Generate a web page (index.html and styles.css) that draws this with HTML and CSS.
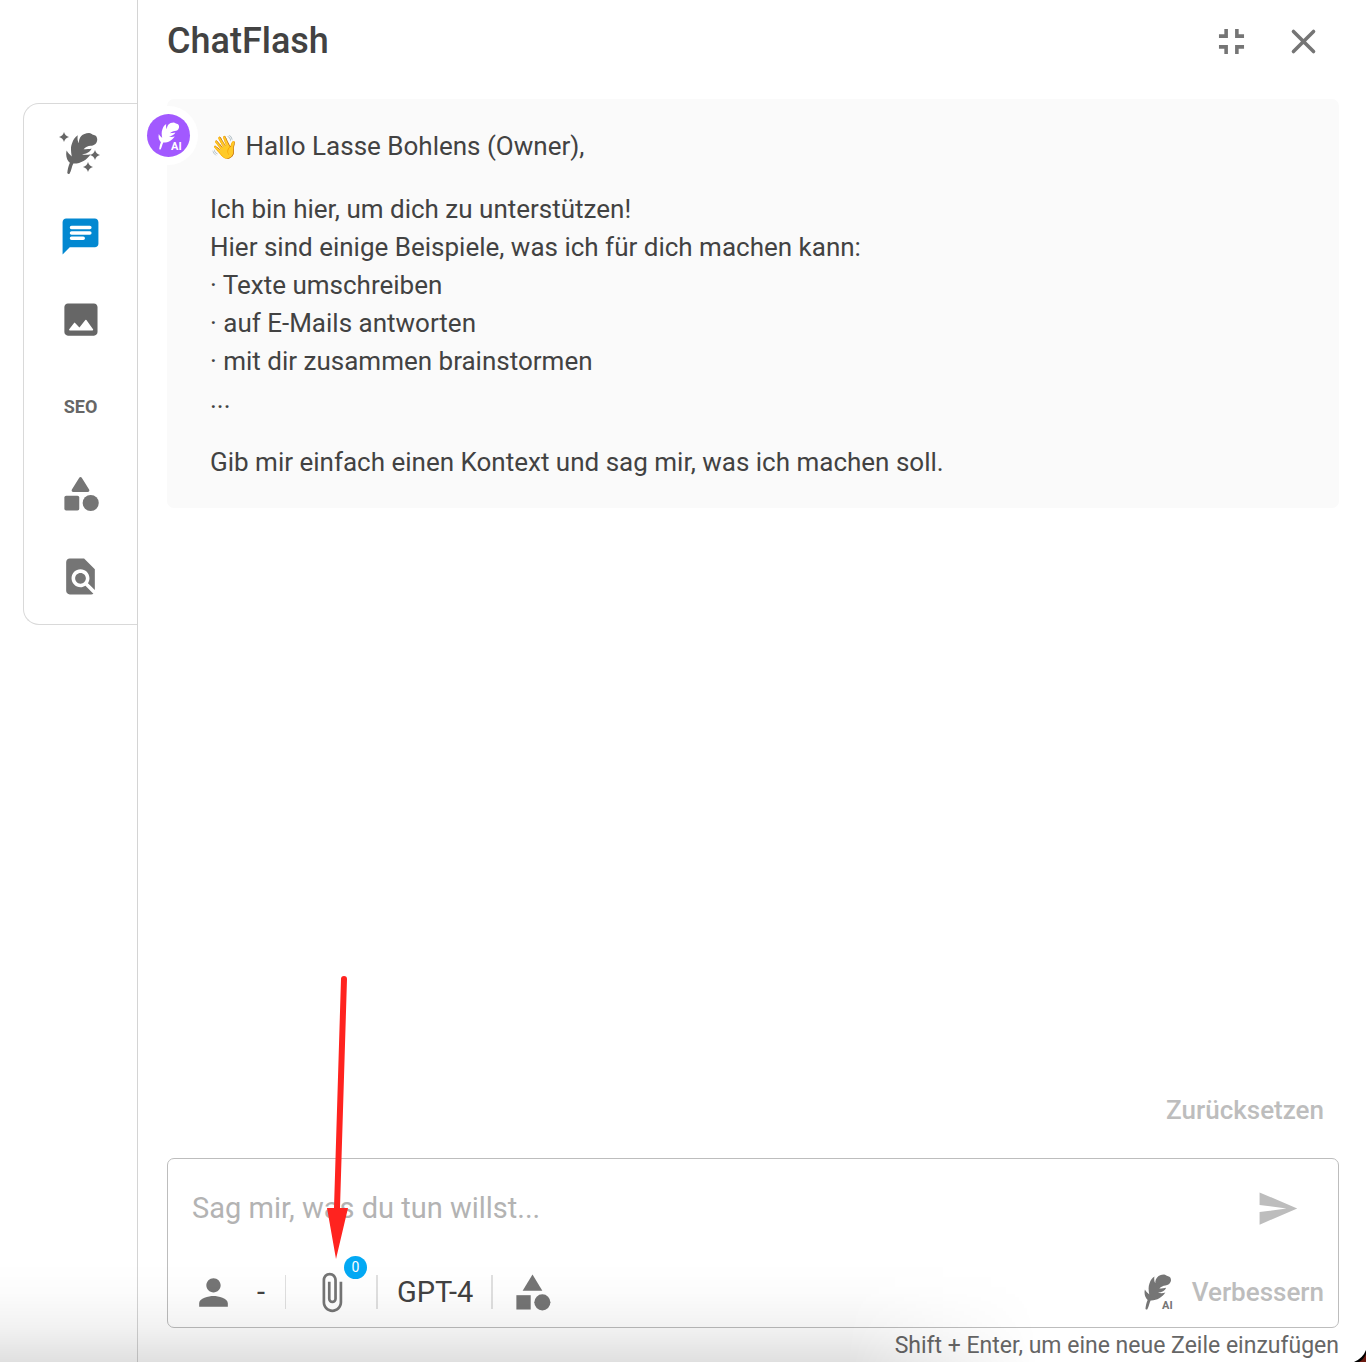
FILE: index.html
```html
<!DOCTYPE html>
<html lang="de">
<head>
<meta charset="utf-8">
<meta name="viewport" content="width=device-width, initial-scale=1">
<title>ChatFlash</title>
<link rel="stylesheet" href="styles.css">
</head>
<body>
<svg class="defs" aria-hidden="true">
  <symbol id="feather" viewBox="0 0 100 132">
    <path d="M4 127 C5 117 7 106 12 95 C3 87 -2 73 2 57 C6 65 12 70 18 75 C15 60 14 45 19 34 C23 22 28 14 37 9 C35 17 36 27 40 34 C40 16 50 3 72 2 C78 2 80 7 87 8 C96 10 99 18 97 27 C94 38 87 41 77 42 C69 43 61 46 55 53 C64 52 74 52 80 50 C76 60 64 67 50 68 C57 71 68 71 77 68 C65 86 45 98 23 97 C18 105 17 119 11 129 Q7 132 4 127Z"/>
  </symbol>
  <symbol id="shapes" viewBox="0 0 24 24">
    <path d="m12 2-5.500 9h11z"/><circle cx="17.500" cy="17.500" r="4.500"/><path d="M3 13.500h8v8H3z"/>
  </symbol>
</svg>
<div class="app">
  <aside class="sidebar">
    <nav class="tabs" aria-label="Werkzeuge">
      <button class="tab" aria-label="Texte">
        <svg class="icon" viewBox="0 0 43 43"><use href="#feather" x="7" y="0" width="32" height="43"/><path d="M5 0q1 4 5 5-4 1-5 5-1-4-5-5 4-1 5-5zM36 18q1 4 5 5-4 1-5 5-1-4-5-5 4-1 5-5zM29 30q1 4 5 5-4 1-5 5-1-4-5-5 4-1 5-5z"/></svg>
      </button>
      <button class="tab tab-active" aria-label="Chat">
        <svg class="icon" viewBox="0 0 24 24"><path d="M20 2H4c-1.100 0-2 .9-2 2v18l4-4h14c1.100 0 2-.9 2-2V4c0-1.100-.9-2-2-2zM7 6h10.200a.8.800 0 0 1 0 2H7a.8.800 0 0 1 0-2zm6.500 8H7a.8.800 0 0 1 0-2h6.500a.8.800 0 0 1 0 2zm3.700-3H7a.8.800 0 0 1 0-2h10.200a.8.800 0 0 1 0 2z"/></svg>
      </button>
      <button class="tab" aria-label="Bilder">
        <svg class="icon" viewBox="0 0 24 24"><path d="M21.500 19V5c0-1.100-.9-2-2-2h-14.500c-1.100 0-2 .9-2 2v14c0 1.100.9 2 2 2h14.500c1.100 0 2-.9 2-2zM9 13.900l2.400 2.600 3.300-4.200a.4.400 0 0 1 .6 0l3.700 5.200a.4.400 0 0 1-.3.600H6a.4.400 0 0 1-.3-.6l2.700-3.600a.4.400 0 0 1 .6 0z"/></svg>
      </button>
      <button class="tab tab-seo">SEO</button>
      <button class="tab tab-light" aria-label="Vorlagen">
        <svg class="icon" viewBox="0 0 24 24"><path d="m11.200 3.300-4 6.500c-.4.700 0 1.400.8 1.400h8c.8 0 1.200-.8.800-1.400l-4-6.500c-.4-.6-1.200-.6-1.600 0z"/><circle cx="17.700" cy="17.300" r="4.500"/><rect x="3" y="13.300" width="8.300" height="8.200" rx="1"/></svg>
      </button>
      <button class="tab tab-light" aria-label="Suche">
        <svg class="icon" viewBox="0 0 24 24"><path d="M20 19.600V8l-6-6H6c-1.100 0-2 .9-2 2v16c0 1.100.9 2 2 2h12c.45 0 .85-.15 1.190-.4l-4.430-4.430c-.8.520-1.740.830-2.760.830-2.760 0-5-2.240-5-5s2.240-5 5-5 5 2.240 5 5c0 1.020-.31 1.960-.83 2.750L20 19.600zM9 13c0 1.660 1.340 3 3 3s3-1.340 3-3-1.340-3-3-3-3 1.340-3 3z"/></svg>
      </button>
    </nav>
  </aside>

  <main class="panel">
    <header class="header">
      <h1 class="title">ChatFlash</h1>
      <div class="window-actions">
        <button class="icon-button" aria-label="Verkleinern"><svg class="icon" viewBox="0 0 24 24"><path d="M5 16h3v3h2v-5H5v2zm3-8H5v2h5V5H8v3zm6 11h2v-3h3v-2h-5v5zm2-11V5h-2v5h5V8h-3z"/></svg></button>
        <button class="icon-button" aria-label="Schließen"><svg class="icon stroked" viewBox="0 0 24 24"><path d="m6.400 6.400 11.200 11.200m0-11.200L6.400 17.600"/></svg></button>
      </div>
    </header>

    <section class="message">
      <div class="avatar">
        <svg class="avatar-icon" viewBox="0 0 43 43"><use href="#feather" x="10" y="8" width="24" height="28"/><text class="ai-mark" x="24" y="36">AI</text></svg>
      </div>
      <p><span class="wave">👋</span> Hallo Lasse Bohlens (Owner),</p>
      <p>Ich bin hier, um dich zu unterstützen!<br>Hier sind einige Beispiele, was ich für dich machen kann:<br>· Texte umschreiben<br>· auf E-Mails antworten<br>· mit dir zusammen brainstormen<br>...</p>
      <p>Gib mir einfach einen Kontext und sag mir, was ich machen soll.</p>
    </section>

    <button class="text-button reset" disabled>Zurücksetzen</button>

    <form class="composer">
      <div class="prompt-row">
        <input class="prompt" type="text" aria-label="Nachricht" placeholder="Sag mir, was du tun willst...">
        <button class="icon-button send" type="button" aria-label="Senden" disabled><svg class="icon" viewBox="0 0 24 24"><path d="M2 21l21-9L2 3v7l15 2-15 2z"/></svg></button>
      </div>
      <div class="toolbar">
        <button class="tool persona" type="button" aria-label="Persona"><svg class="icon" viewBox="0 0 24 24"><path d="M12 12c2.210 0 4-1.790 4-4s-1.790-4-4-4-4 1.790-4 4 1.790 4 4 4zm0 2c-2.670 0-8 1.340-8 4v2h16v-2c0-2.660-5.330-4-8-4z"/></svg><span class="persona-name">-</span></button>
        <button class="tool attach" type="button" aria-label="Datei anhängen">
          <svg class="icon" viewBox="0 0 24 24"><path d="M16.500 6v11.500c0 2.210-1.790 4-4 4s-4-1.790-4-4V5c0-1.380 1.120-2.500 2.500-2.500s2.500 1.120 2.500 2.500v10.500c0 .55-.45 1-1 1s-1-.45-1-1V6H10v9.500c0 1.380 1.120 2.500 2.500 2.500s2.500-1.120 2.500-2.500V5c0-2.210-1.790-4-4-4S7 2.790 7 5v12.500c0 3.040 2.460 5.500 5.500 5.500s5.500-2.460 5.500-5.500V6h-1.500z"/></svg>
          <span class="badge">0</span>
          <svg class="pointer" viewBox="0 0 24 284" aria-hidden="true"><path d="M14 4a3 3 0 0 1 6 0L13 233h8L9 284 0 233h7z"/></svg>
        </button>
        <button class="tool model" type="button">GPT-4</button>
        <button class="tool templates" type="button" aria-label="Vorlagen"><svg class="icon" viewBox="0 0 24 24"><use href="#shapes"/></svg></button>
        <button class="text-button improve" type="button" disabled>
          <svg class="improve-icon" viewBox="0 0 30 38"><use href="#feather" x="0" y="1" width="28" height="36"/><text class="ai-mark" x="18" y="36">AI</text></svg>
          Verbessern
        </button>
      </div>
    </form>
    <p class="hint">Shift + Enter, um eine neue Zeile einzufügen</p>
  </main>
  <div class="bottom-shade"></div>
  <svg class="corner" viewBox="0 0 12 12" aria-hidden="true"><path d="M12 0Q9 8 0 12h12z"/><path class="corner-red" d="M12 4Q10 9 5 12h7z"/></svg>
</div>
</body>
</html>
```
FILE: styles.css
```css
* { box-sizing: border-box; }

body {
  margin: 0;
  background: #fff;
  color: #424242;
  font-family: Roboto, "Liberation Sans", sans-serif;
  font-size: 26px;
  line-height: 38px;
}

button, input {
  font: inherit;
  color: inherit;
  background: none;
  border: 0;
  padding: 0;
  margin: 0;
}

p, h1 { margin: 0; }

.defs { display: none; }

.app {
  position: relative;
  display: flex;
  min-height: 100vh;
}

.icon {
  display: block;
  flex: none;
  width: 43px;
  height: 43px;
  fill: currentColor;
}

.stroked {
  fill: none;
  stroke: currentColor;
  stroke-width: 2;
  stroke-linecap: round;
}

/* Sidebar */
.sidebar {
  flex: none;
  width: 138px;
  padding: 103px 0 0 23px;
  border-right: 1px solid #d4d4d4;
}

.tabs {
  display: flex;
  flex-direction: column;
  align-items: center;
  gap: 40px;
  padding: 28px 0 26px;
  border: 1px solid #d9d9d9;
  border-right: 0;
  border-radius: 16px 0 0 16px;
}

.tab {
  display: grid;
  place-items: center;
  width: 43px;
  height: 43px;
  color: #666;
}

.tab-active { color: #0288d1; }
.tab-light { color: #757575; }

.tab-seo {
  height: 51px;
  font-size: 18px;
  font-weight: 700;
}

/* Chat panel */
.panel {
  flex: 1;
  min-width: 0;
  display: flex;
  flex-direction: column;
  padding: 0 27px 0 29px;
}

.header {
  display: flex;
  justify-content: space-between;
  align-items: center;
  height: 99px;
  padding: 0 14px 17px 0;
}

.title {
  font-size: 36px;
  font-weight: 500;
  line-height: 44px;
}

.window-actions {
  display: flex;
  gap: 29px;
  color: #757575;
}

.message {
  position: relative;
  display: flex;
  flex-direction: column;
  gap: 25px;
  padding: 28px 43px 27px;
  border-radius: 7px;
  background: #fafafa;
}

.wave {
  font-size: 23px;
  line-height: 1;
}

.avatar {
  position: absolute;
  left: -28px;
  top: 7px;
  padding: 8px;
  border-radius: 50%;
  background: #fff;
}

.avatar-icon {
  display: block;
  width: 43px;
  height: 43px;
  border-radius: 50%;
  background: #a259ff;
  fill: #fff;
}

.ai-mark {
  font-size: 11px;
  font-weight: 700;
}

.text-button {
  font-weight: 500;
  color: #bdbdbd;
}

.reset {
  align-self: flex-end;
  margin: auto 15px 29px 0;
}

.composer {
  height: 170px;
  padding: 24px 14px 13px 24px;
  border: 1px solid #bdbdbd;
  border-radius: 7px;
}

.prompt-row {
  display: flex;
  align-items: center;
  height: 50px;
  padding-right: 25px;
}

.prompt {
  flex: 1;
  min-width: 0;
  font-size: 29px;
  outline: 0;
}

.prompt::placeholder { color: #b3b3b3; opacity: 1; }

.send { color: #bdbdbd; }

.toolbar {
  display: flex;
  align-items: center;
  height: 82px;
  padding-top: 36px;
  color: #757575;
}

.tool {
  display: flex;
  align-items: center;
  height: 34px;
}

.persona {
  gap: 22px;
  width: 94px;
  border-right: 1px solid #e0e0e0;
  font-size: 29px;
}

.persona-name { color: #424242; }

.attach {
  position: relative;
  width: 92px;
  padding-left: 24px;
  border-right: 2px solid #e0e0e0;
}

.badge {
  position: absolute;
  top: -19px;
  right: 9px;
  width: 23px;
  height: 23px;
  border-radius: 50%;
  background: #03a9f4;
  color: #fff;
  font-size: 14px;
  line-height: 23px;
}

/* Red arrow that calls out the attachment button */
.pointer {
  position: absolute;
  left: 41px;
  bottom: 50px;
  width: 24px;
  height: 284px;
  fill: #ff231f;
  pointer-events: none;
}

.model {
  width: 115px;
  padding-left: 19px;
  border-right: 2px solid #e0e0e0;
  font-size: 29px;
  color: #424242;
}

.templates { padding-left: 18px; }

.improve {
  display: flex;
  align-items: center;
  gap: 18px;
  margin-left: auto;
}

.improve-icon {
  width: 30px;
  height: 38px;
  fill: #757575;
}

.hint {
  height: 34px;
  font-size: 23px;
  line-height: 36px;
  text-align: right;
  color: #666;
}

.bottom-shade {
  position: absolute;
  inset: auto 0 0 0;
  height: 100px;
  background: linear-gradient(to bottom, rgb(0 0 0 / 0) 0, rgb(0 0 0 / 0.01) 30%, rgb(0 0 0 / 0.05) 65%, rgb(0 0 0 / 0.12) 100%);
  -webkit-mask-image: linear-gradient(to right, #000 62%, transparent 76%);
  mask-image: linear-gradient(to right, #000 62%, transparent 76%);
  pointer-events: none;
}

.corner {
  position: absolute;
  right: 0;
  bottom: 0;
  width: 12px;
  height: 12px;
}

.corner-red { fill: #6b1a10; }
```
